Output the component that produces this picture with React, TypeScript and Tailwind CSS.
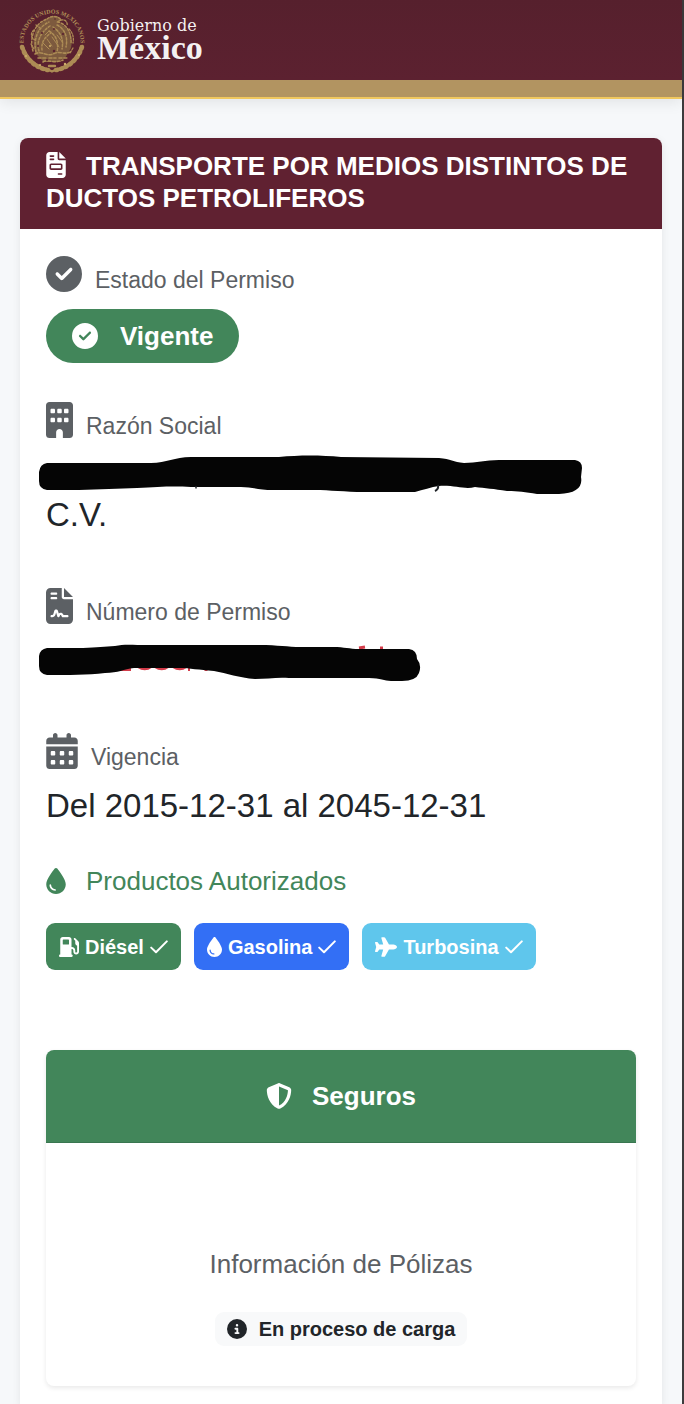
import type { ReactNode } from "react";
import {
  FaBuilding,
  FaCalendarDays,
  FaCircleCheck,
  FaCircleInfo,
  FaDroplet,
  FaFileContract,
  FaFileInvoice,
  FaGasPump,
  FaPlane,
  FaShieldHalved,
} from "react-icons/fa6";

function Seal() {
  return (
    <svg viewBox="0 0 68 68" className="size-[68px] shrink-0" role="img" aria-label="Escudo Nacional">
      <defs>
        <path id="seal-arc" d="M6.6 44 A28.5 28.5 0 1 1 61.4 44" />
      </defs>
      <text fill="#b08f57" fontSize="6" fontWeight="bold" fontFamily="Liberation Serif, serif">
        <textPath href="#seal-arc" startOffset="50%" textAnchor="middle">
          ESTADOS UNIDOS MEXICANOS
        </textPath>
      </text>
      <path
        fill="#7d5a3e"
        d="M29 13 C34 9 41 10 43 14 L40 17 C50 20 56 30 53 42 L47 52 L38 56 H26 L19 49 C13 40 14 20 29 13 Z"
      />
      <g fill="none" stroke="#ad8c55" strokeLinecap="round">
        <path d="M4 41 C8 54 18 62 30 64" strokeWidth="4.5" strokeDasharray="1.6 3.4" />
        <path d="M64 41 C60 54 50 62 38 64" strokeWidth="4.5" strokeDasharray="1.6 3.4" />
        <path d="M5 40 C9 52 18 60 30 63 M63 40 C59 52 50 60 39 63" strokeWidth="1.8" />
        <path d="M29 63 l5 2.5 5 -2.5 M31 60 h6" strokeWidth="2.4" />
        <path
          d="M15 45 C11 31 17 17 29 13 M18 46 C15 33 20 21 31 16 M21 45 C18 35 23 26 32 20 M24 44 C23 36 27 31 33 27"
          strokeWidth="1.5"
          strokeDasharray="2 1.9"
        />
        <path
          d="M29 13 C34 9 41 10 43 14 L39 16 C47 17 54 25 53 38 M39 19 C47 23 50 31 48 41 M35 21 C42 26 46 32 44 43 M31 25 C38 29 41 36 39 46"
          strokeWidth="1.5"
          strokeDasharray="2.4 1.7"
        />
        <path
          d="M16 24 C12 27 13 32 17 34 M18 19 l4 3 M43 14 c4 -1 7 2 6 6 M51 23 c4 4 5 9 4 14 M13 38 l3 5 M55 42 l-3 5"
          strokeWidth="1.3"
          strokeDasharray="2 1.5"
        />
        <path d="M17 48 C24 44 28 51 35 48 C42 44 47 50 54 45 M20 52 h8 m3 0 h7 m3 0 h8 M25 56 C30 53 37 58 45 54" strokeWidth="1.6" strokeDasharray="3 1.8" />
        <path d="M29 33 l5 7 M25 37 l6 6 M34 31 l7 10 M39 29 l6 8 M27 29 l4 -4" strokeWidth="1" />
      </g>
      <g fill="#5b2130">
        <circle cx="37" cy="13" r="0.8" />
        <circle cx="24" cy="27" r="1" />
        <circle cx="45" cy="28" r="1.1" />
        <circle cx="36" cy="23" r="0.9" />
        <circle cx="20" cy="40" r="1.1" />
        <circle cx="36" cy="45" r="1.2" />
        <circle cx="29" cy="54" r="1" />
      </g>
      <g fill="#d0b06b">
        <circle cx="61" cy="49" r="1" />
        <circle cx="8" cy="50" r="1" />
        <circle cx="22" cy="59" r="1" />
        <circle cx="47" cy="58" r="1.2" />
        <circle cx="32" cy="40" r="1" />
      </g>
    </svg>
  );
}

function ThinCheck() {
  return (
    <svg viewBox="0 0 18 20" className="h-5 w-[18px]" fill="none" aria-hidden="true">
      <path d="M1.2 10.6 L6 15.2 L16.8 4.4" stroke="currentColor" strokeWidth="2" strokeLinecap="round" strokeLinejoin="round" />
    </svg>
  );
}

function Field({ icon, label, children }: { icon: ReactNode; label: string; children: ReactNode }) {
  return (
    <div className="mb-[39px]">
      <dt className="flex h-10 items-start gap-[13px] text-[#5c6064]">
        {icon}
        <span className="self-end text-[23px] leading-8">{label}</span>
      </dt>
      <dd className="mt-[13px] text-[33px] leading-10">{children}</dd>
    </div>
  );
}

function Chip({ icon, color, children }: { icon: ReactNode; color: string; children: ReactNode }) {
  return (
    <li className={`flex h-[47px] items-center gap-1.5 rounded-[9px] px-[13px] text-xl font-bold text-white ${color}`}>
      {icon}
      {children}
      <ThinCheck />
    </li>
  );
}

export default function App() {
  return (
    <div className="flex min-h-screen flex-col border-r-2 border-[#3d3b3d] bg-[#f6f8fa] font-['Liberation_Sans',Arial,sans-serif] text-[#212529]">
      <header className="border-b-2 border-[#f0c75e] shadow-[0_3px_14px_rgba(0,0,0,0.09)]">
        <div className="flex h-20 items-center gap-[11px] bg-linear-to-b from-[#56202d] to-[#5c2130] pl-[18px]">
          <Seal />
          <div className="text-white/95">
            <p className="font-['DejaVu_Serif',serif] text-base leading-4">Gobierno de</p>
            <p className="font-['Liberation_Serif',serif] text-[34px] leading-7 font-bold">México</p>
          </div>
        </div>
        <div className="h-[17px] bg-[#b29461]" />
      </header>

      <main className="flex flex-1 flex-col px-5 pt-[39px]">
        <section className="flex-1 rounded-t-[8px] bg-white shadow-[0_2px_8px_rgba(0,0,0,0.08)]">
          <h1 className="rounded-t-[8px] bg-[#602131] px-[26px] pt-3 pb-[15px] text-[26px] leading-8 font-bold text-white">
            <FaFileInvoice className="mr-5 inline-block h-[26px] w-5 align-[-3px]" />
            TRANSPORTE POR MEDIOS DISTINTOS DE DUCTOS PETROLIFEROS
          </h1>

          <div className="px-[26px] pt-[27px] pb-5">
            <dl>
              <Field icon={<FaCircleCheck className="size-9" />} label="Estado del Permiso">
                <span className="inline-flex h-[54px] items-center gap-[22px] rounded-full bg-[#42865a] px-[26px] align-top text-[26px] font-bold text-white">
                  <FaCircleCheck className="size-[26px]" />
                  Vigente
                </span>
              </Field>

              <Field icon={<FaBuilding className="h-9 w-[27px]" />} label="Razón Social">
                <svg viewBox="0 0 544 40" className="-ml-[7px] block h-10 w-[544px] max-w-none" aria-hidden="true">
                  <path
                    fill="#050505"
                    d="M8 8 H112 C128 8 135 2 152 2 H240 C260 0 282 0 302 2 L400 3 C412 4 414 7 425 8 C438 8 446 5 460 5 H536 Q543 6 543 13 L542 22 Q545 38 520 39 H498 C486 37 478 36 468 36 C455 34 446 33 436 32 C426 35 416 30 400 31 C392 32 384 35 376 37 H318 C300 36 285 35 270 35 H234 C220 35 213 32 202 32 H152 C132 31 120 32 98 33 C80 34 60 34 40 35 H8 Q0 34 0 26 V17 Q1 9 8 8 Z"
                  />
                  <path d="M399 30 q1 4 -3 6" fill="none" stroke="#212529" strokeWidth="2" />
                  <path d="M157 31 v2.5" stroke="#212529" strokeWidth="1.5" />
                </svg>
                C.V.
              </Field>
            </dl>

            <dl className="mt-[53px]">
              <Field icon={<FaFileContract className="h-9 w-[27px]" />} label="Número de Permiso">
                <svg viewBox="0 0 382 40" className="-ml-[7px] block h-10 w-[382px] max-w-none" aria-hidden="true">
                  <g fill="none" stroke="#d33c4a" strokeWidth="3">
                    <path d="M80 28.5 h12 M99 25.5 q7 4.5 13 0 M116 25.5 q7 4.5 13 0 M134 25.5 q7 4.5 13 0 M149 28.5 h2 M167 27 v3 M320 7 l6 -1 M341 7 h3" />
                  </g>
                  <path
                    fill="#050505"
                    d="M8 7 H44 C58 6 66 6 76 5 C85 3 92 4 110 4 H220 C240 4 248 6 262 6 H294 C306 6 310 8 320 8 H370 Q378 9 378 18 Q383 24 380 32 Q377 40 363 40 H352 C345 40 342 37 330 37 H250 C238 36 228 38 216 38 C200 37 188 32 175 30 C160 29 150 27 142 27 H95 C84 28 80 32 66 32 C48 34 30 34 8 34 Q0 33 0 25 V15 Q1 8 8 7 Z"
                  />
                </svg>
              </Field>

              <div className="mt-[52px]">
                <Field icon={<FaCalendarDays className="h-9 w-8" />} label="Vigencia">
                  Del 2015-12-31 al 2045-12-31
                </Field>
              </div>
            </dl>

            <h2 className="flex h-8 items-center gap-5 text-[26px] text-[#42865a]">
              <FaDroplet className="h-[26px] w-5" />
              Productos Autorizados
            </h2>
            <ul className="mt-[26px] flex flex-wrap gap-[13px]">
              <Chip color="bg-[#42865a]" icon={<FaGasPump className="size-5" />}>
                Diésel
              </Chip>
              <Chip color="bg-[#336ff5]" icon={<FaDroplet className="h-5 w-[15px]" />}>
                Gasolina
              </Chip>
              <Chip color="bg-[#5fc6ec]" icon={<FaPlane className="h-5 w-[22px]" />}>
                Turbosina
              </Chip>
            </ul>

            <section className="mt-20 rounded-[8px] shadow-[0_2px_5px_rgba(0,0,0,0.09)]">
              <h2 className="flex h-[93px] items-center justify-center gap-5 rounded-t-[8px] border-b border-[#397650] bg-[#42865a] text-[26px] font-bold text-white">
                <FaShieldHalved className="size-[26px]" />
                Seguros
              </h2>
              <div className="flex flex-col items-center pt-[105px] pb-10">
                <p className="text-[26px] leading-8 text-[#5c6064]">Información de Pólizas</p>
                <span className="mt-8 flex h-[34px] items-center gap-3 rounded-[9px] bg-[#f8f9fa] px-3 text-xl font-bold">
                  <FaCircleInfo className="size-5" />
                  En proceso de carga
                </span>
              </div>
            </section>
          </div>
        </section>
      </main>
    </div>
  );
}
